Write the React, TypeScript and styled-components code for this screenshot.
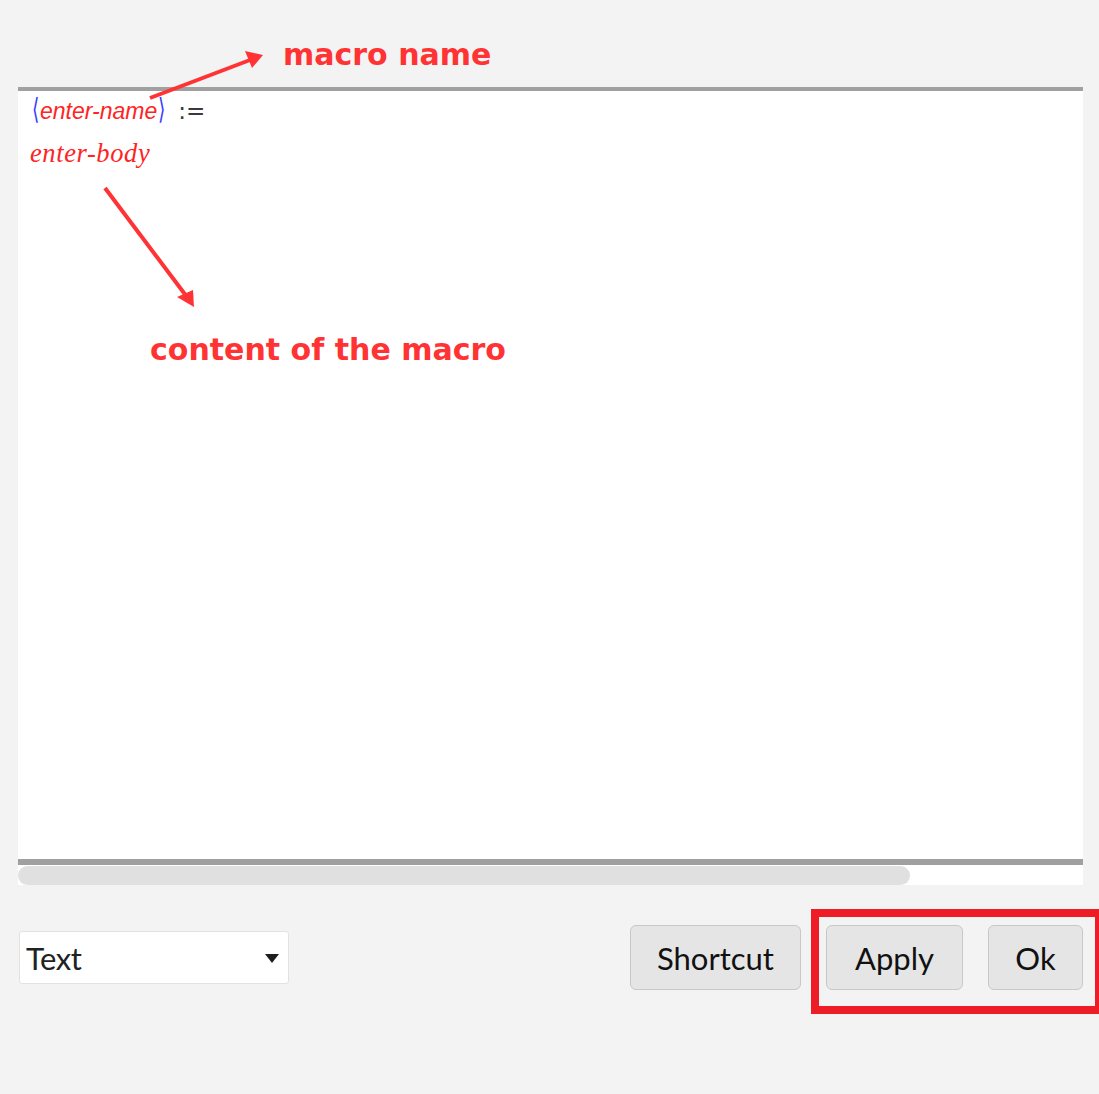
import React from "react";
import styled, { createGlobalStyle } from "styled-components";

const Global = createGlobalStyle`
  html, body { margin: 0; padding: 0; background: #f3f3f3; }
  body { width: 1099px; height: 1094px; overflow: hidden; }
`;

const Page = styled.div`
  position: relative;
  width: 1099px;
  height: 1094px;
  box-sizing: border-box;
  padding: 87px 16px 0 18px;
  display: flex;
  flex-direction: column;
  background: #f3f3f3;
`;

const Panel = styled.div`
  display: flex;
  flex-direction: column;
  background: #ffffff;
  border-top: 4px solid #a0a0a0;
`;

const Editor = styled.div`
  height: 768px;
  box-sizing: border-box;
  padding: 1px 0 0 12px;
  display: flex;
  flex-direction: column;
`;

const Line = styled.div<{ $h: number }>`
  height: ${(p) => p.$h}px;
  display: flex;
  align-items: baseline;
  white-space: nowrap;
`;

const Bracket = styled.span`
  font-family: "DejaVu Sans", sans-serif;
  font-size: 29px;
  font-weight: 200;
  color: #3a3aff;
  transform: scaleX(0.65);
  display: inline-block;
  margin: 0;
`;

const NameText = styled.span`
  font-family: "Liberation Sans", sans-serif;
  font-style: italic;
  font-size: 23px;
  color: #ff2424;
  margin: 0 -1px;
`;

const Assign = styled.span`
  font-family: "DejaVu Sans", sans-serif;
  font-size: 23px;
  color: #3a3a3a;
  margin-left: 11px;
`;

const BodyText = styled.span`
  font-family: "Liberation Serif", serif;
  font-style: italic;
  font-size: 26.5px;
  letter-spacing: 0.6px;
  color: #ff2424;
`;

const Divider = styled.div`
  height: 6px;
  background: #a0a0a0;
`;

const Track = styled.div`
  height: 20px;
  display: flex;
  align-items: center;
  background: #ffffff;
`;

const Thumb = styled.div`
  width: 892px;
  height: 19px;
  border-radius: 10px;
  background: #e0e0e0;
`;

const Footer = styled.div`
  margin-top: 40px;
  height: 65px;
  display: flex;
  align-items: center;
  gap: 25px;
`;

const Select = styled.div`
  margin-left: 1px;
  width: 270px;
  height: 53px;
  box-sizing: border-box;
  background: #ffffff;
  border: 1px solid #e2e2e2;
  border-radius: 3px;
  display: flex;
  align-items: center;
  justify-content: space-between;
  padding: 0 9px 0 6px;
  margin-right: auto;
`;

const SelectLabel = styled.span`
  font-family: Lato, "Liberation Sans", sans-serif;
  font-size: 31px;
  letter-spacing: -0.5px;
  color: #222;
`;

const Caret = styled.span`
  width: 0;
  height: 0;
  border-left: 7px solid transparent;
  border-right: 7px solid transparent;
  border-top: 9px solid #1e1e1e;
  margin-top: 2px;
`;

const Button = styled.button<{ $w: number }>`
  width: ${(p) => p.$w}px;
  height: 65px;
  box-sizing: border-box;
  background: #e5e5e5;
  border: 1px solid #c8c8c8;
  border-radius: 6px;
  font-family: Lato, "Liberation Sans", sans-serif;
  font-size: 31px;
  color: #111;
  padding: 0;
  display: flex;
  align-items: center;
  justify-content: center;
`;

const Note = styled.div<{ $x: number; $y: number }>`
  position: absolute;
  left: ${(p) => p.$x}px;
  top: ${(p) => p.$y}px;
  font-family: "DejaVu Sans", sans-serif;
  font-weight: bold;
  font-size: 30px;
  line-height: 30px;
  color: #ff3333;
  white-space: nowrap;
`;

const Overlay = styled.svg`
  position: absolute;
  left: 0;
  top: 0;
  pointer-events: none;
`;

const Highlight = styled.div`
  position: absolute;
  left: 811px;
  top: 909px;
  width: 292px;
  height: 105px;
  box-sizing: border-box;
  border: 8px solid #ee1c25;
`;

export default function App() {
  return (
    <>
      <Global />
      <Page>
        <Panel>
          <Editor>
            <Line $h={46}>
              <Bracket>⟨</Bracket>
              <NameText>enter-name</NameText>
              <Bracket>⟩</Bracket>
              <Assign>:=</Assign>
            </Line>
            <Line $h={40}>
              <BodyText>enter-body</BodyText>
            </Line>
          </Editor>
          <Divider />
          <Track>
            <Thumb />
          </Track>
        </Panel>
        <Footer>
          <Select>
            <SelectLabel>Text</SelectLabel>
            <Caret />
          </Select>
          <Button $w={171}>Shortcut</Button>
          <Button $w={137}>Apply</Button>
          <Button $w={95}>Ok</Button>
        </Footer>

        <Note $x={283} $y={40}>macro name</Note>
        <Note $x={150} $y={335}>content of the macro</Note>
        <Overlay width="1099" height="1094" viewBox="0 0 1099 1094">
          <g stroke="#ff3333" strokeWidth="4" strokeLinecap="butt" fill="#ff3333">
            <line x1="150" y1="98" x2="250" y2="60" />
            <polygon points="263,55 245,51 252,68" stroke="none" />
            <line x1="105" y1="188" x2="187" y2="297" />
            <polygon points="194,307 177,297 193,290" stroke="none" />
          </g>
        </Overlay>
        <Highlight />
      </Page>
    </>
  );
}
